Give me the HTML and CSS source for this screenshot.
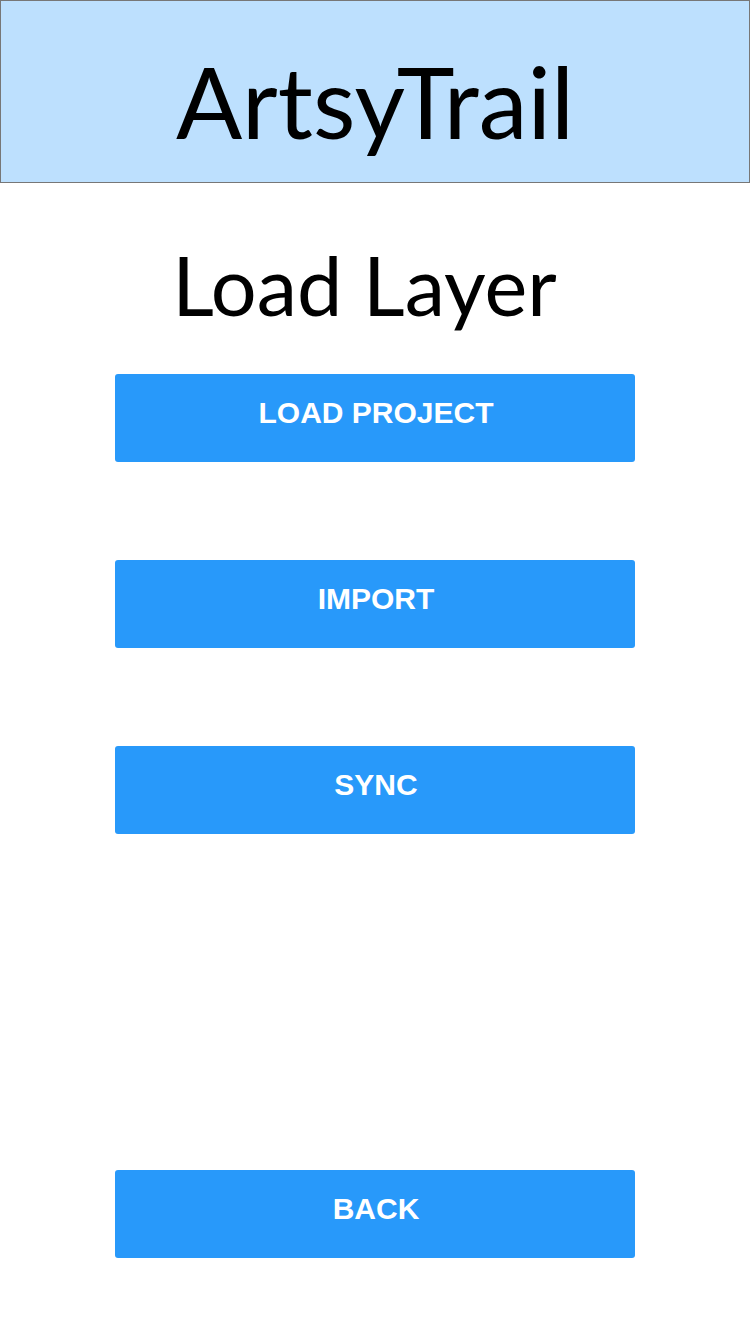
FILE: index.html
```html
<!DOCTYPE html>
<html>
<head>
<meta charset="utf-8">
<link rel="stylesheet" href="styles.css">
</head>
<body>
<div class="page">
  <header class="header">
    <h1 class="brand">ArtsyTrail</h1>
  </header>
  <main class="content">
    <h2 class="title">Load Layer</h2>
    <div class="actions">
      <button class="btn">LOAD PROJECT</button>
      <button class="btn">IMPORT</button>
      <button class="btn">SYNC</button>
    </div>
    <button class="btn btn-back">BACK</button>
  </main>
</div>
</body>
</html>
```

FILE: styles.css
```css
* { box-sizing: border-box; }
html, body { margin: 0; padding: 0; background: #fff; }
.page {
  width: 750px;
  min-height: 1334px;
  display: flex;
  flex-direction: column;
}
.header {
  height: 183px;
  background: #bde0fe;
  border: 1px solid #777;
  display: flex;
  align-items: center;
  justify-content: center;
}
.brand {
  margin: 0;
  font-family: Lato, "Noto Sans", sans-serif;
  font-weight: 400;
  font-size: 98px;
  line-height: 1;
  color: #000;
  padding-top: 18px;
}
.content {
  flex: 1;
  display: flex;
  flex-direction: column;
  align-items: center;
  padding-bottom: 76px;
}
.title {
  margin: 0;
  margin-top: 61px;
  padding-right: 21px;
  font-family: Lato, "Noto Sans", sans-serif;
  font-weight: 400;
  font-size: 81px;
  line-height: 1;
  height: 130px;
  color: #000;
}
.actions {
  display: flex;
  flex-direction: column;
  gap: 98px;
}
.btn {
  width: 520px;
  height: 88px;
  border: none;
  border-radius: 3px;
  background: #2899fa;
  color: #fff;
  font-family: "Liberation Sans", Arial, sans-serif;
  font-weight: 700;
  font-size: 30px;
  display: flex;
  justify-content: center;
  align-items: flex-start;
  padding: 22px 0 0 2px;
}
.btn-back { margin-top: auto; }
```
